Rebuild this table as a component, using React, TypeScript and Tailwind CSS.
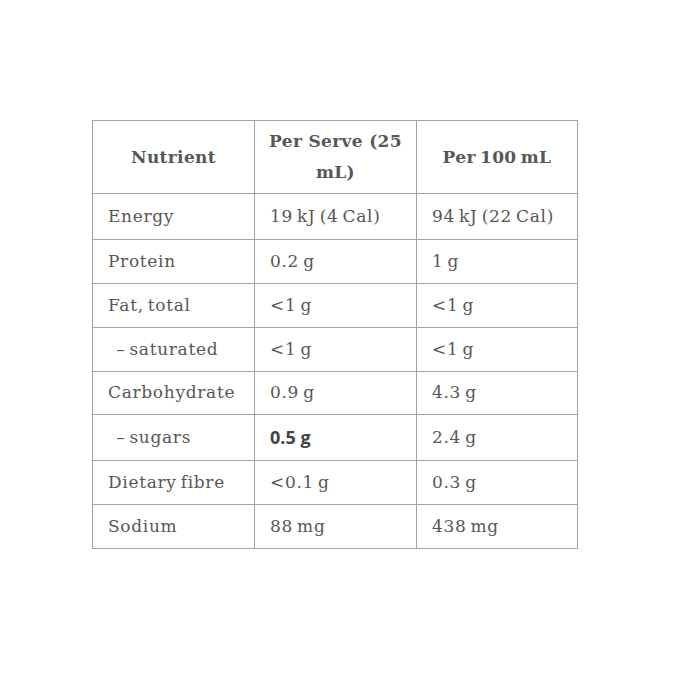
const rows: { name: string; serve: string; per100: string; bold?: boolean; h: string }[] = [
  { name: 'Energy', serve: '19 kJ (4 Cal)', per100: '94 kJ (22 Cal)', h: 'h-[46px]' },
  { name: 'Protein', serve: '0.2 g', per100: '1 g', h: 'h-[44px]' },
  { name: 'Fat, total', serve: '<1 g', per100: '<1 g', h: 'h-[44px]' },
  { name: '\u00a0\u00a0– saturated', serve: '<1 g', per100: '<1 g', h: 'h-[44px]' },
  { name: 'Carbohydrate', serve: '0.9 g', per100: '4.3 g', h: 'h-[43px]' },
  { name: '\u00a0\u00a0– sugars', serve: '0.5 g', per100: '2.4 g', bold: true, h: 'h-[46px]' },
  { name: 'Dietary fibre', serve: '<0.1 g', per100: '0.3 g', h: 'h-[44px]' },
  { name: 'Sodium', serve: '88 mg', per100: '438 mg', h: 'h-[44px]' },
];

export default function App() {
  return (
    <div className="w-[700px] h-[700px] bg-white pt-[120px] pl-[92px]">
      <table className="border-collapse table-fixed w-[485px] text-[#575757] font-['DejaVu_Serif',serif] text-[17px] tracking-[0.04em]">
        <colgroup>
          <col className="w-[162px]" />
          <col className="w-[162px]" />
          <col className="w-[161px]" />
        </colgroup>
        <thead>
          <tr className="h-[73px]">
            <th className="border border-[#a3a3a3] px-[12px] text-center font-bold leading-[31px] tracking-[0.02em]">Nutrient</th>
            <th className="border border-[#a3a3a3] px-[12px] text-center font-bold leading-[31px] tracking-[0.02em]">Per Serve (25 mL)</th>
            <th className="border border-[#a3a3a3] px-[12px] text-center font-bold leading-[31px] tracking-[0.02em] [word-spacing:-2px]">Per 100 mL</th>
          </tr>
        </thead>
        <tbody className="[word-spacing:-2px]">
          {rows.map((r) => (
            <tr key={r.name} className={r.h}>
              <td className="border border-[#a3a3a3] px-[15px] whitespace-pre">{r.name}</td>
              <td className="border border-[#a3a3a3] px-[15px]">
                {r.bold ? (
                  <span className="font-['Open_Sans',sans-serif] font-bold text-[18px] tracking-normal [word-spacing:0px] text-[#444]">{r.serve}</span>
                ) : (
                  r.serve
                )}
              </td>
              <td className="border border-[#a3a3a3] px-[15px]">{r.per100}</td>
            </tr>
          ))}
        </tbody>
      </table>
    </div>
  );
}
